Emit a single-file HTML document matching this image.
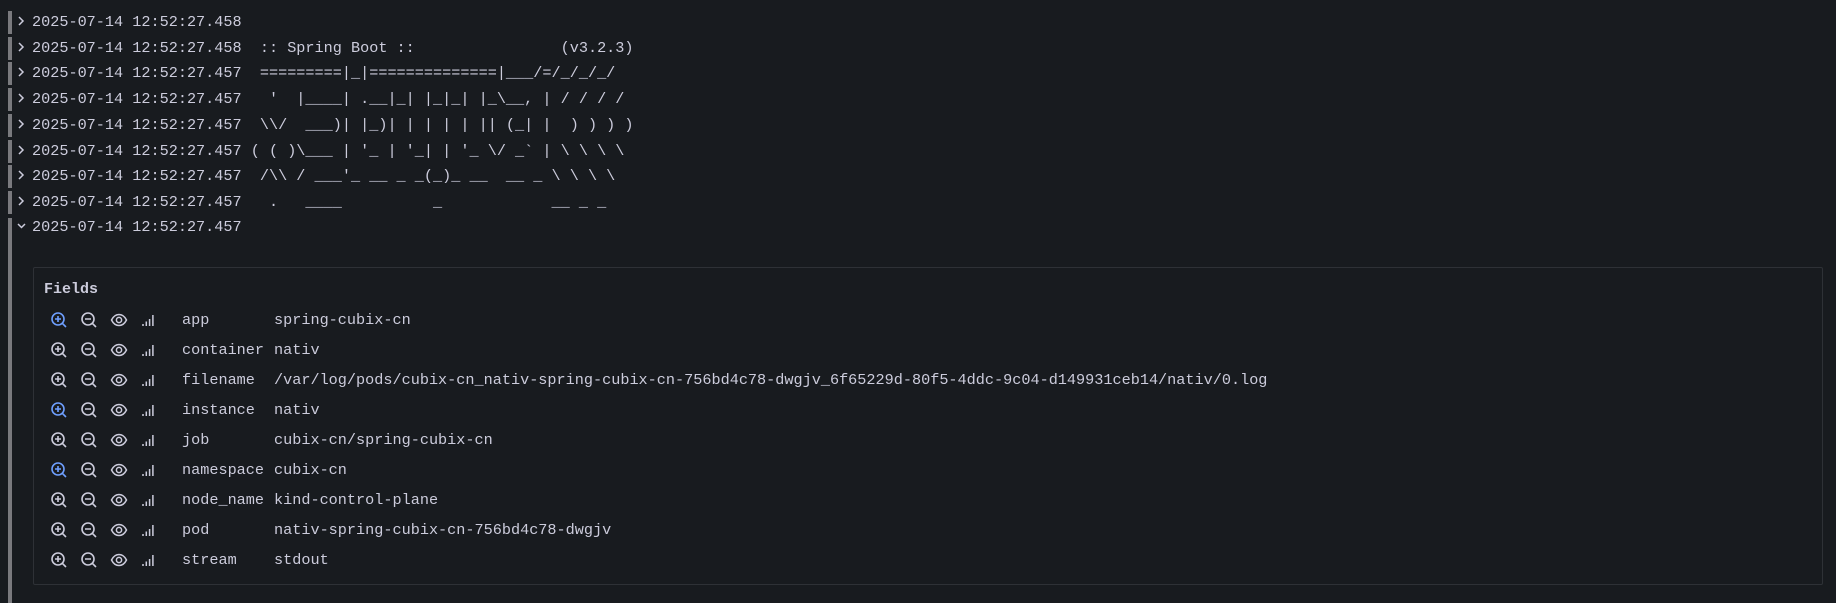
<!DOCTYPE html>
<html><head><meta charset="utf-8"><style>
html,body{margin:0;padding:0;background:#181b1f;width:1836px;height:603px;overflow:hidden}
body{position:relative;font-family:"Liberation Mono",monospace;color:#ccccdc;font-size:15.2px}
.row{position:absolute;left:0;height:30px;width:1836px}
.bar{position:absolute;left:8px;top:4px;width:4px;height:23px;background:#7a7a7e}
.chev{position:absolute;left:16px;top:7px;width:10px;height:14px}
.t{position:absolute;left:32px;top:5px;white-space:pre;line-height:20px}
.box{position:absolute;left:33px;top:267px;width:1790px;height:318px;border:1px solid #2e3136;border-radius:2px;box-sizing:border-box}
.lab{position:absolute;left:44px;top:279px;font-weight:bold;font-size:15px;line-height:22px}
.f{position:absolute;left:0;height:30px;width:1836px}
.f svg{position:absolute;top:5px}
.k{position:absolute;left:182px;top:4px;white-space:pre;line-height:20px}
.v{position:absolute;left:274px;top:4px;white-space:pre;line-height:20px}
</style></head><body>
<div style="position:absolute;left:8px;top:218px;width:4px;height:385px;background:#7a7a7e"></div>

<div class="row" style="top:7px"><div class="bar"></div><svg class="chev" viewBox="0 0 10 14"><path d="M3 3l4 4-4 4" stroke="#ccccdc" stroke-width="1.5" fill="none"/></svg><div class="t">2025-07-14 12:52:27.458</div></div>
<div class="row" style="top:33px"><div class="bar"></div><svg class="chev" viewBox="0 0 10 14"><path d="M3 3l4 4-4 4" stroke="#ccccdc" stroke-width="1.5" fill="none"/></svg><div class="t">2025-07-14 12:52:27.458  :: Spring Boot ::                (v3.2.3)</div></div>
<div class="row" style="top:58px"><div class="bar"></div><svg class="chev" viewBox="0 0 10 14"><path d="M3 3l4 4-4 4" stroke="#ccccdc" stroke-width="1.5" fill="none"/></svg><div class="t">2025-07-14 12:52:27.457  =========|_|==============|___/=/_/_/_/</div></div>
<div class="row" style="top:84px"><div class="bar"></div><svg class="chev" viewBox="0 0 10 14"><path d="M3 3l4 4-4 4" stroke="#ccccdc" stroke-width="1.5" fill="none"/></svg><div class="t">2025-07-14 12:52:27.457   '  |____| .__|_| |_|_| |_\__, | / / / /</div></div>
<div class="row" style="top:110px"><div class="bar"></div><svg class="chev" viewBox="0 0 10 14"><path d="M3 3l4 4-4 4" stroke="#ccccdc" stroke-width="1.5" fill="none"/></svg><div class="t">2025-07-14 12:52:27.457  \\/  ___)| |_)| | | | | || (_| |  ) ) ) )</div></div>
<div class="row" style="top:136px"><div class="bar"></div><svg class="chev" viewBox="0 0 10 14"><path d="M3 3l4 4-4 4" stroke="#ccccdc" stroke-width="1.5" fill="none"/></svg><div class="t">2025-07-14 12:52:27.457 ( ( )\___ | '_ | '_| | '_ \/ _` | \ \ \ \</div></div>
<div class="row" style="top:161px"><div class="bar"></div><svg class="chev" viewBox="0 0 10 14"><path d="M3 3l4 4-4 4" stroke="#ccccdc" stroke-width="1.5" fill="none"/></svg><div class="t">2025-07-14 12:52:27.457  /\\ / ___'_ __ _ _(_)_ __  __ _ \ \ \ \</div></div>
<div class="row" style="top:187px"><div class="bar"></div><svg class="chev" viewBox="0 0 10 14"><path d="M3 3l4 4-4 4" stroke="#ccccdc" stroke-width="1.5" fill="none"/></svg><div class="t">2025-07-14 12:52:27.457   .   ____          _            __ _ _</div></div>
<div class="row" style="top:212px"><svg class="chev" viewBox="0 0 10 14"><path d="M2 5l3.5 3.5L9 5" stroke="#ccccdc" stroke-width="1.5" fill="none"/></svg><div class="t">2025-07-14 12:52:27.457</div></div>

<div class="box"></div>
<div class="lab">Fields</div>

<svg width="0" height="0" style="position:absolute">
<defs>
<g id="zi"><circle cx="8" cy="8" r="6" fill="none" stroke-width="1.6"/><path d="M12.3 12.3L16 16M5 8h6M8 5v6" stroke-width="1.6" fill="none"/></g>
<g id="zo"><circle cx="8" cy="8" r="6" fill="none" stroke-width="1.6"/><path d="M12.3 12.3L16 16M5 8h6" stroke-width="1.6" fill="none"/></g>
<g id="ey"><path d="M1.5 9C3.5 5 6 3.5 9 3.5S14.5 5 16.5 9C14.5 13 12 14.5 9 14.5S3.5 13 1.5 9Z" fill="none" stroke-width="1.5"/><circle cx="9" cy="9" r="2.6" fill="none" stroke-width="1.5"/></g>
<g id="br"><path d="M3 15v-2M6.3 15v-4.5M9.6 15v-7M12.9 15V4" stroke-width="1.5" fill="none"/></g>
</defs></svg>

<div id="fields"></div>
<script>
var data=[["app","spring-cubix-cn",1],["container","nativ",0],["filename","/var/log/pods/cubix-cn_nativ-spring-cubix-cn-756bd4c78-dwgjv_6f65229d-80f5-4ddc-9c04-d149931ceb14/nativ/0.log",0],["instance","nativ",1],["job","cubix-cn/spring-cubix-cn",0],["namespace","cubix-cn",1],["node_name","kind-control-plane",0],["pod","nativ-spring-cubix-cn-756bd4c78-dwgjv",0],["stream","stdout",0]];
var h="";
data.forEach(function(d,i){
var top=306+i*30;var c=d[2]?"#6e9fff":"#ccccdc";
h+='<div class="f" style="top:'+top+'px">'+
'<svg style="left:50px" width="18" height="18" viewBox="0 0 18 18" stroke="'+c+'"><use href="#zi"/></svg>'+
'<svg style="left:80px" width="18" height="18" viewBox="0 0 18 18" stroke="#ccccdc"><use href="#zo"/></svg>'+
'<svg style="left:110px" width="18" height="18" viewBox="0 0 18 18" stroke="#ccccdc"><use href="#ey"/></svg>'+
'<svg style="left:140px" width="18" height="18" viewBox="0 0 18 18" stroke="#ccccdc"><use href="#br"/></svg>'+
'<div class="k">'+d[0]+'</div><div class="v">'+d[1]+'</div></div>';
});
document.getElementById("fields").innerHTML=h;
</script>
</body></html>
